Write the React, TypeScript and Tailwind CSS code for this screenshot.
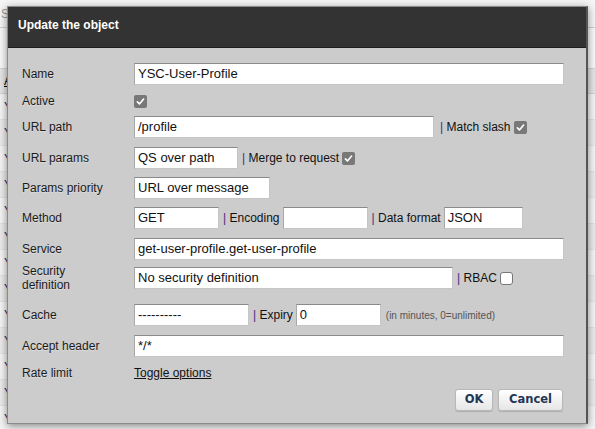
import React from "react";

const Tick = () => (
  <svg viewBox="0 0 13 13" className="w-[9px] h-[9px]">
    <path d="M2 7l3 3 6-7" fill="none" stroke="#fff" strokeWidth="2.4" strokeLinecap="round" strokeLinejoin="round" />
  </svg>
);

const Checked = () => (
  <span className="inline-flex w-[13px] h-[13px] items-center justify-center rounded-[2px] bg-[#787878]">
    <Tick />
  </span>
);

const Unchecked = () => (
  <span className="inline-block w-[13px] h-[13px] rounded-[3px] bg-white border border-[#777]" />
);

const Field = ({ w, value }: { w: string; value?: string }) => (
  <div
    className={`${w} h-[22px] flex items-center bg-white border border-[#c6c6c6] border-t-[#8a8a8a] border-l-[#a8a8a8] pl-[3px] text-[13px] text-[#111] whitespace-nowrap overflow-hidden`}
  >
    {value}
  </div>
);

const Sep = ({ text }: { text: string }) => (
  <span className="ml-[4px] mr-[3px] text-[12px] text-[#111] whitespace-nowrap">
    <span className="text-[#4a2a80]">|</span> {text}
  </span>
);

const Label = ({ children }: { children: React.ReactNode }) => (
  <div className="w-[112px] shrink-0 text-[12px] leading-[14px] text-[#1a1a1a] [text-shadow:0_1px_0_rgba(255,255,255,0.35)]">
    {children}
  </div>
);

const bgRows = Array.from({ length: 13 });

export default function App() {
  return (
    <div className="relative w-[595px] h-[429px] overflow-hidden bg-[#f5f5f5] font-['Liberation_Sans',Arial,sans-serif]">
      {/* page behind the dialog */}
      <div className="flex flex-col">
        <div className="h-[28px] flex items-center pl-[1px] text-[12px] text-[#999] border-b border-[#cfcfcf]">
          Se
        </div>
        <div className="h-[40px] bg-[#f8f8f8]" />
        <div className="h-[26px] flex items-center pl-[4px] text-[12px] text-black bg-[#e4e4e4] border-y border-[#d2d2d2]">
          <span className="underline">A</span>
        </div>
        {bgRows.map((_, i) => (
          <div
            key={i}
            className={`h-[26px] flex items-center pl-[4px] text-[12px] text-[#3a2060] border-b border-[#e2e2e2] ${
              i % 2 === 0 ? "bg-[#f4f4f4]" : "bg-[#ebebeb]"
            }`}
          >
            Y
          </div>
        ))}
      </div>

      {/* dialog */}
      <div className="absolute left-[7px] top-[6px] w-[581px] h-[418px] flex flex-col bg-[#cccccc] border border-[#8a8a8a] border-r-[#555] border-r-2 shadow-[0_2px_8px_rgba(0,0,0,0.45)]">
        <div className="h-[41px] shrink-0 flex items-center pl-[10px] pb-[4px] bg-[#333333] border-b border-[#1f1f1f] text-white text-[12px] font-bold">
          Update the object
        </div>

        <div className="flex flex-col pl-[14px] pt-[15px]">
          <div className="flex items-center h-[22px]">
            <Label>Name</Label>
            <Field w="w-[430px]" value="YSC-User-Profile" />
          </div>

          <div className="flex items-center h-[22px] mt-[5px]">
            <Label>Active</Label>
            <Checked />
          </div>

          <div className="flex items-center h-[22px] mt-[4px]">
            <Label>URL path</Label>
            <Field w="w-[300px]" value="/profile" />
            <span className="ml-[2px]" />
            <Sep text="Match slash" />
            <Checked />
          </div>

          <div className="flex items-center h-[22px] mt-[9px]">
            <Label>URL params</Label>
            <Field w="w-[104px]" value="QS over path" />
            <Sep text="Merge to request" />
            <Checked />
          </div>

          <div className="flex items-center h-[22px] mt-[8px]">
            <Label>Params priority</Label>
            <Field w="w-[136px]" value="URL over message" />
          </div>

          <div className="flex items-center h-[22px] mt-[8px]">
            <Label>Method</Label>
            <Field w="w-[85px]" value="GET" />
            <Sep text="Encoding" />
            <Field w="w-[85px]" />
            <Sep text="Data format" />
            <Field w="w-[79px]" value="JSON" />
          </div>

          <div className="flex items-center h-[22px] mt-[9px]">
            <Label>Service</Label>
            <Field w="w-[430px]" value="get-user-profile.get-user-profile" />
          </div>

          <div className="flex items-center h-[28px] mt-[4px]">
            <Label>
              Security
              <br />
              definition
            </Label>
            <Field w="w-[319px]" value="No security definition" />
            <Sep text="RBAC" />
            <Unchecked />
          </div>

          <div className="flex items-center h-[22px] mt-[12px]">
            <Label>Cache</Label>
            <Field w="w-[115px]" value="----------" />
            <Sep text="Expiry" />
            <Field w="w-[85px]" value="0" />
            <span className="ml-[5px] text-[10px] text-[#555]">(in minutes, 0=unlimited)</span>
          </div>

          <div className="flex items-center h-[22px] mt-[9px]">
            <Label>Accept header</Label>
            <Field w="w-[430px]" value="*/*" />
          </div>

          <div className="flex items-center h-[16px] mt-[8px]">
            <Label>Rate limit</Label>
            <span className="text-[12px] text-[#111] underline">Toggle options</span>
          </div>

          <div className="flex justify-end gap-[5px] pr-[23px] mt-[8px]">
            <button className="w-[38px] h-[22px] rounded-[3px] border border-[#b8b8b8] bg-gradient-to-b from-white to-[#e6e6e6] shadow-[0_1px_1px_rgba(0,0,0,0.15)] text-[11.5px] font-bold text-[#1f3657] font-['DejaVu_Sans',Verdana,sans-serif]">
              OK
            </button>
            <button className="w-[65px] h-[22px] rounded-[3px] border border-[#b8b8b8] bg-gradient-to-b from-white to-[#e6e6e6] shadow-[0_1px_1px_rgba(0,0,0,0.15)] text-[11.5px] font-bold text-[#1f3657] font-['DejaVu_Sans',Verdana,sans-serif]">
              Cancel
            </button>
          </div>
        </div>
      </div>
    </div>
  );
}
